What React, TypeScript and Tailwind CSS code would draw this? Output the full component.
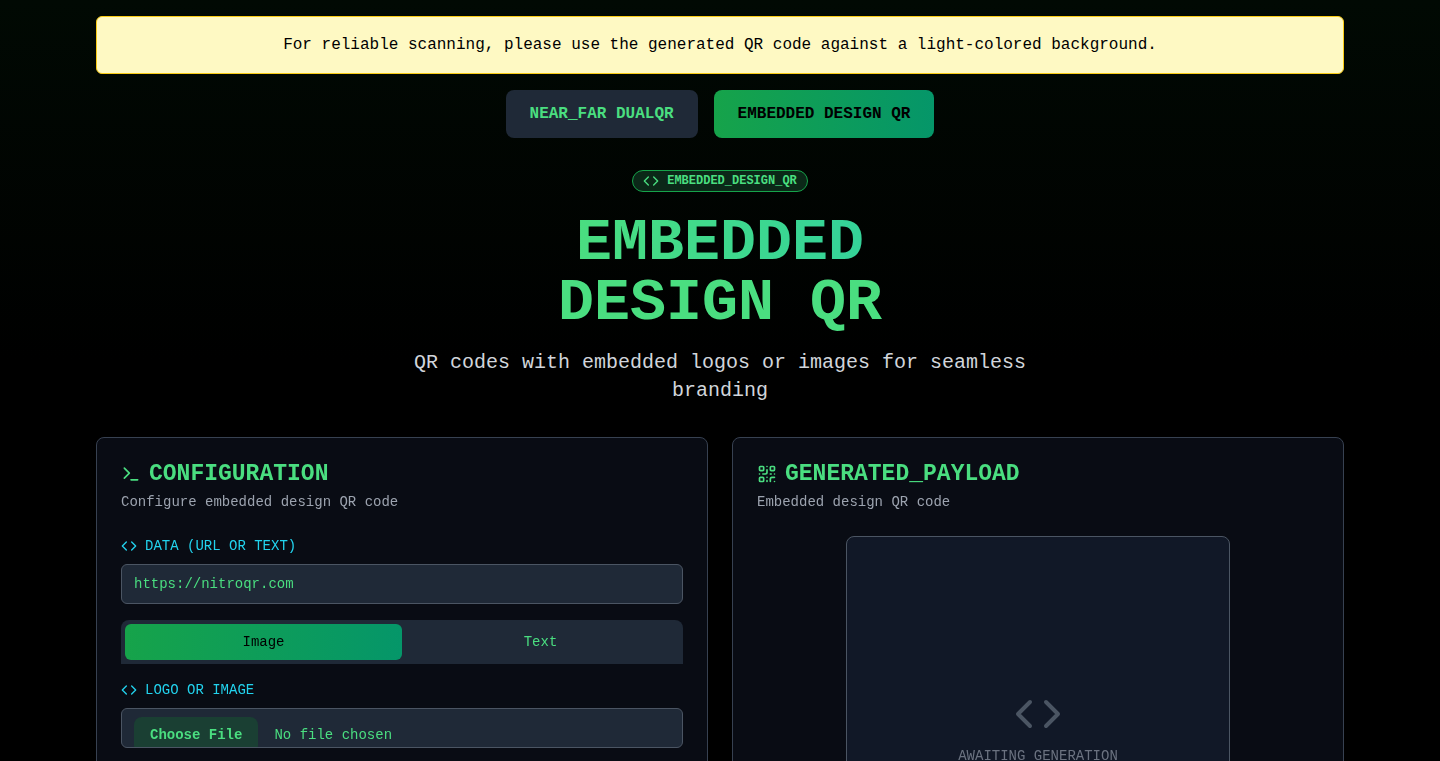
import { useState } from "react";
import { Code, QrCode, Terminal } from "lucide-react";

const modes = [
  { id: "dual", label: "NEAR_FAR DUALQR" },
  { id: "embedded", label: "EMBEDDED DESIGN QR" },
];

const cardClass = "rounded-lg border border-[#374151] bg-[#111827]/50 p-6 backdrop-blur-sm";
const labelClass = "flex items-center gap-2 text-sm text-[#22d3ee]";
const inputClass = "h-10 w-full rounded-md border border-[#4b5563] bg-[#1f2937] px-3 py-2 text-sm text-[#4ade80] outline-none";

export default function App() {
  const [mode, setMode] = useState("embedded");
  const [tab, setTab] = useState<"Image" | "Text">("Image");
  const [data, setData] = useState("https://nitroqr.com");

  return (
    <div className="min-h-screen bg-black bg-[linear-gradient(to_bottom,#010903_0px,#000000_360px)] font-['Liberation_Mono',monospace]">
      <div className="mx-auto max-w-7xl px-4 py-4">
        <div role="alert" className="rounded-md border border-[#facc15] bg-[#fef9c3] p-4 text-center text-base text-black">
          For reliable scanning, please use the generated QR code against a light-colored background.
        </div>

        <div className="mt-4 flex flex-wrap justify-center gap-4">
          {modes.map((m) => (
            <button key={m.id} onClick={() => setMode(m.id)} className={`rounded-lg px-6 py-3 text-base font-bold ${mode === m.id ? "bg-linear-to-r/srgb from-[#16a34a] to-[#059669] text-black" : "bg-[#1f2937] text-[#4ade80]"}`}>{m.label}</button>
          ))}
        </div>

        <header className="mt-8 flex flex-col items-center text-center">
          <div className="mb-[21px] flex items-center gap-2 rounded-full border border-[#16a34a] bg-[#0b2818] px-2.5 py-0.5 text-xs font-bold text-[#4ade80]">
            <Code className="h-4 w-4" /> EMBEDDED_DESIGN_QR
          </div>
          <h1 className="mb-4 text-6xl leading-none font-bold text-[#4ade80]">
            <span className="bg-linear-to-r/srgb from-[#4ade80] to-[#34d399] bg-clip-text text-transparent">EMBEDDED</span>
            <br />
            DESIGN QR
          </h1>
          <p className="max-w-2xl text-xl text-[#d1d5db]">QR codes with embedded logos or images for seamless branding</p>
        </header>

        <div className="mt-8 grid gap-6 lg:grid-cols-2">
          <section className={cardClass}>
            <h2 className="flex items-center gap-2 text-[23px] leading-6 font-bold text-[#4ade80]"><Terminal className="h-5 w-5" />CONFIGURATION</h2>
            <p className="mt-1.5 text-sm text-[#9ca3af]">Configure embedded design QR code</p>

            <div className="mt-6 space-y-4">
              <div className="space-y-2">
                <label htmlFor="qr-data" className={labelClass}><Code className="h-4 w-4" />DATA (URL OR TEXT)</label>
                <input id="qr-data" type="text" value={data} onChange={(e) => setData(e.target.value)} className={inputClass} />
              </div>

              <div role="tablist" className="grid grid-cols-2 rounded-t-lg bg-[#1f2937] p-1">
                {(["Image", "Text"] as const).map((t) => (
                  <button key={t} role="tab" aria-selected={tab === t} onClick={() => setTab(t)} className={`rounded-md px-3 py-2 text-sm ${tab === t ? "bg-linear-to-r/srgb from-[#16a34a] to-[#059669] text-black" : "text-[#4ade80]"}`}>{t}</button>
                ))}
              </div>

              <div className="space-y-2">
                <label htmlFor="qr-logo" className={labelClass}><Code className="h-4 w-4" />LOGO OR IMAGE</label>
                <input id="qr-logo" type="file" accept="image/*" className={`${inputClass} file:mr-4 file:rounded-lg file:border-0 file:bg-[#1a3f33] file:px-4 file:py-2 file:text-sm file:font-semibold file:text-[#4ade80]`} />
              </div>
            </div>
          </section>

          <section className={cardClass}>
            <h2 className="flex items-center gap-2 text-[23px] leading-6 font-bold text-[#4ade80]"><QrCode className="h-5 w-5" />GENERATED_PAYLOAD</h2>
            <p className="mt-1.5 text-sm text-[#9ca3af]">Embedded design QR code</p>

            <div className="mx-auto mt-6 flex aspect-square w-full max-w-sm flex-col items-center justify-center gap-2 rounded-lg border border-[#4b5563] bg-[#111827]">
              <Code className="h-12 w-12 text-[#4b5563]" />
              <p className="text-sm text-[#6b7280]">AWAITING GENERATION</p>
            </div>
          </section>
        </div>
      </div>
    </div>
  );
}
